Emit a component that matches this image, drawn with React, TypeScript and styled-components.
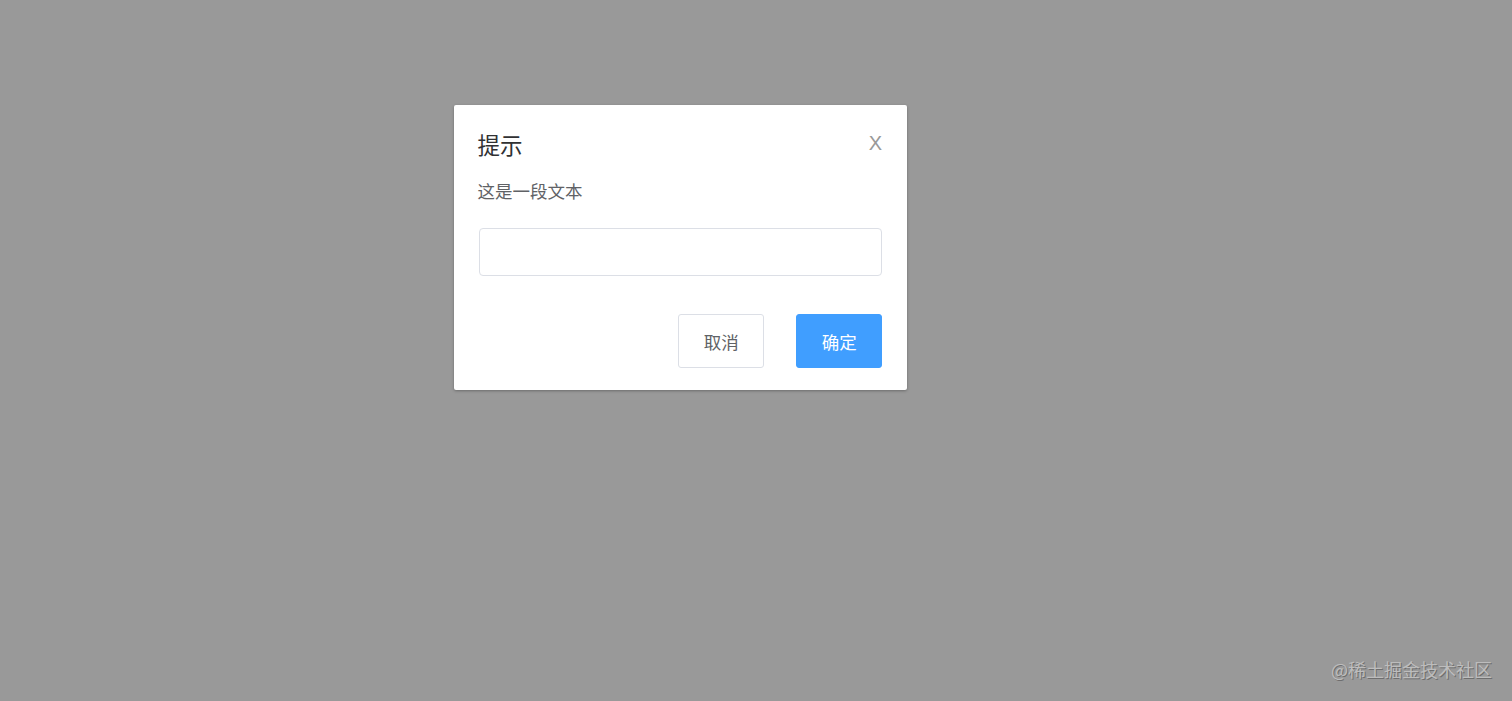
import React, { FC } from "react";
import styled, { createGlobalStyle } from "styled-components";

const FONT = `"Noto Sans CJK SC", "Liberation Sans", sans-serif`;

const GlobalStyle = createGlobalStyle`
  html, body {
    margin: 0;
    padding: 0;
    height: 100%;
    background: #999999;
    font-family: ${FONT};
  }
  #root {
    height: 100%;
  }
`;

const Overlay = styled.div`
  position: relative;
  height: 701px;
  background: #999999;
  padding: 105px 0 0 30vw;
  box-sizing: border-box;
  display: flex;
  align-items: flex-start;
`;

const Dialog = styled.div`
  flex: 0 0 30vw;
  height: 285px;
  box-sizing: border-box;
  background: #fff;
  border-radius: 2px;
  box-shadow: 0 1px 3px rgba(0, 0, 0, 0.3);
  padding: 24px 25px 22px 24px;
  display: flex;
  flex-direction: column;
`;

const Header = styled.div`
  display: flex;
  justify-content: space-between;
  align-items: center;
  height: 32px;
`;

const Title = styled.h2`
  margin: -3px 0 0;
  font-size: 22.5px;
  font-weight: 400;
  color: #303133;
`;

const Close = styled.span`
  font-family: "Liberation Sans", sans-serif;
  font-size: 20px;
  color: #999;
  margin-top: -3px;
  cursor: pointer;
`;

const Message = styled.p`
  margin: 19px 0 0;
  font-size: 17.5px;
  line-height: 22px;
  color: #606266;
`;

const Input = styled.input`
  margin-top: 26px;
  margin-left: 1px;
  height: 48px;
  box-sizing: border-box;
  border: 1px solid #dcdfe6;
  border-radius: 4px;
  outline: none;
  padding: 0 12px;
  font-family: ${FONT};
  font-size: 16px;
`;

const Footer = styled.div`
  margin-top: auto;
  display: flex;
  justify-content: flex-end;
  gap: 32px;
`;

const Button = styled.button<{ primary?: boolean }>`
  width: 86px;
  height: 54px;
  border-radius: 3px;
  font-family: ${FONT};
  font-size: 17.5px;
  cursor: pointer;
  border: 1px solid ${({ primary }) => (primary ? "#409eff" : "#dcdfe6")};
  background: ${({ primary }) => (primary ? "#409eff" : "#fff")};
  color: ${({ primary }) => (primary ? "#fff" : "#606266")};
`;

const Watermark = styled.span`
  position: absolute;
  right: 20px;
  bottom: 19px;
  font-size: 18px;
  color: #bdbdbd;
  text-shadow: 1px 1px 0 #6e6e6e;
`;

const App: FC = () => (
  <>
    <GlobalStyle />
    <Overlay>
      <Dialog>
        <Header>
          <Title>提示</Title>
          <Close>X</Close>
        </Header>
        <Message>这是一段文本</Message>
        <Input />
        <Footer>
          <Button>取消</Button>
          <Button primary>确定</Button>
        </Footer>
      </Dialog>
      <Watermark>@稀土掘金技术社区</Watermark>
    </Overlay>
  </>
);

export default App;
